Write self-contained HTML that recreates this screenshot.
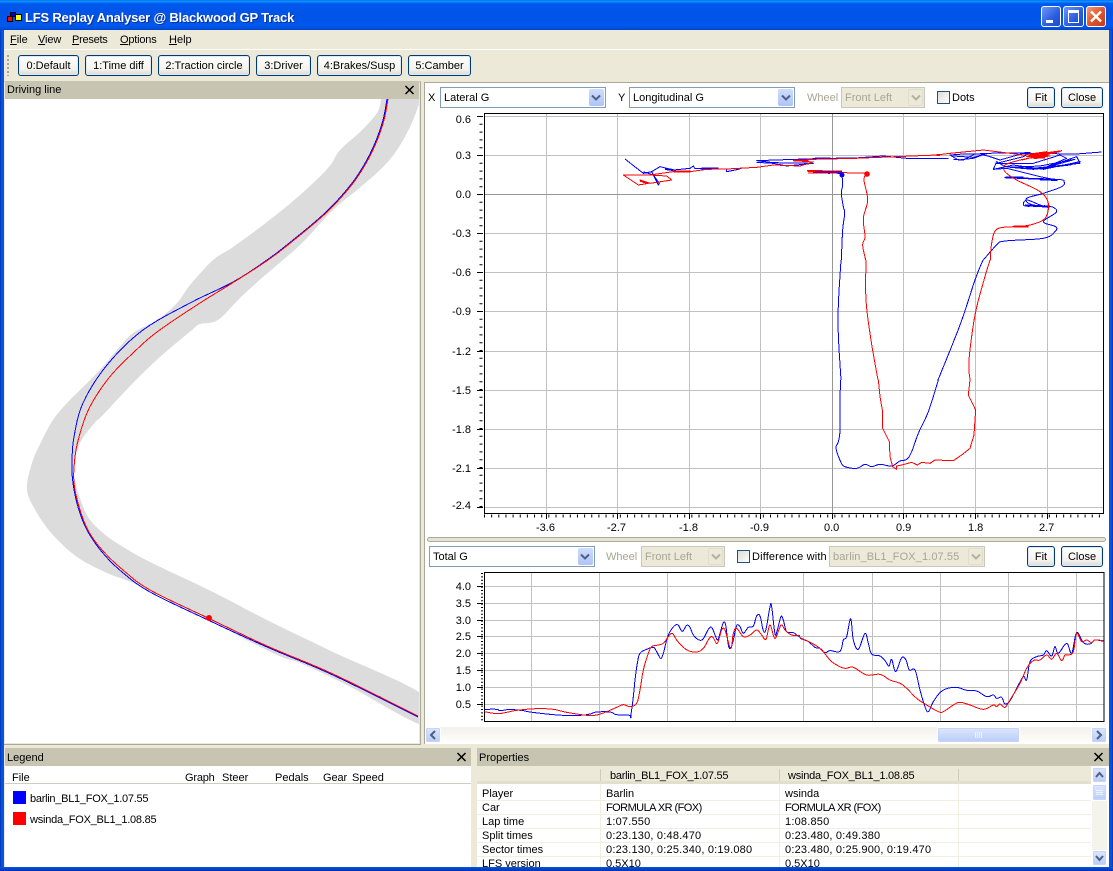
<!DOCTYPE html>
<html><head><meta charset="utf-8"><title>LFS Replay Analyser</title>
<style>
html,body{margin:0;padding:0;width:1113px;height:871px;overflow:hidden;background:#ECE9D8}
body{position:relative;font:11px/13px "Liberation Sans",sans-serif;color:#000}
div,span{position:absolute;box-sizing:border-box}
.t{white-space:nowrap;margin-top:1px}
.g{color:#a8a594}
.btn{border:1px solid #003c74;border-radius:3px;background:linear-gradient(#fff,#f4f3ee 70%,#dcd8ce);text-align:center;line-height:21px;box-shadow:inset 0 0 0 1px #dfe8f5;white-space:nowrap}
.hdr{background:#C7C5B2;height:18px}
.w{background:#fff}
.combo{border:1px solid #7F9DB9;background:#fff;height:21px;line-height:21px;padding-left:3px;white-space:nowrap}
.combo.d{border-color:#c9c7ba;background:#ECE9D8;color:#a8a594}
.ar{border-radius:2px;background:linear-gradient(#cfdcfc,#aec4f8);top:1px;bottom:1px;width:15px;right:1px}
.combo.d .ar{background:#ECE9D8;border:1px solid #e0ddcc}
.ck{width:13px;height:13px;border:1px solid #1c5180;background:linear-gradient(135deg,#dcdcd7,#fff)}
.sb{background:linear-gradient(#dde6fd,#b9ccf8);border:1px solid #fff;border-radius:2px;box-shadow:0 0 0 1px #c6d5f8 inset}
svg{position:absolute;left:0;top:0}
.l{fill:none;stroke-width:1;shape-rendering:crispEdges;vector-effect:non-scaling-stroke;stroke-linejoin:round}
.th{stroke-width:2}
.b{stroke:#00f}.r{stroke:#f00}
</style></head><body>

<!-- window frame -->
<div style="left:0;top:0;width:1113px;height:30px;background:linear-gradient(180deg,#0a6af0 0,#0997ff 5%,#0058ee 12%,#0053e6 50%,#0058ee 85%,#0050dc 95%,#0040c8 100%)"></div>
<div style="left:0;top:30px;width:4px;height:841px;background:linear-gradient(90deg,#0030b8,#0855dd 40%,#0855dd)"></div>
<div style="right:0;top:30px;width:4px;height:841px;background:linear-gradient(270deg,#0030b8,#0855dd 40%,#0855dd)"></div>
<div style="left:0;top:867px;width:1113px;height:4px;background:linear-gradient(#0855dd,#0030b8)"></div>

<!-- app icon -->
<div style="left:7px;top:16px;width:6px;height:6px;background:#f00;border:1px solid #000"></div>
<div style="left:10px;top:12px;width:6px;height:5px;background:#00c;border:1px solid #000"></div>
<div style="left:15px;top:14px;width:7px;height:7px;background:#ff0;border:1px solid #000"></div>

<span class="t" style="left:25px;top:9px;font-size:13px;line-height:15px;font-weight:bold;color:#fff;letter-spacing:-.2px;text-shadow:1px 1px 0 #0a2fa0">LFS Replay Analyser @ Blackwood GP Track</span>

<!-- window buttons -->
<div style="left:1041px;top:6px;width:20px;height:21px;border:1px solid #fff;border-radius:3px;background:linear-gradient(135deg,#6f96f5,#2a5ce0 60%,#2048c8)"><div style="left:4px;top:13px;width:7px;height:3px;background:#fff"></div></div>
<div style="left:1063px;top:6px;width:21px;height:21px;border:1px solid #fff;border-radius:3px;background:linear-gradient(135deg,#6f96f5,#2a5ce0 60%,#2048c8)"><div style="left:4px;top:3px;width:11px;height:13px;border:1px solid #fff;border-top-width:3px"></div></div>
<div style="left:1086px;top:6px;width:20px;height:21px;border:1px solid #fff;border-radius:3px;background:linear-gradient(135deg,#f09a7c,#e0562e 50%,#c23a14)">
<svg width="18" height="19"><path d="M4 4.500L14 14.500M14 4.500L4 14.500" stroke="#fff" stroke-width="2.400" fill="none"/></svg></div>

<!-- menu -->
<span class="t" style="left:10px;top:33px"><u>F</u>ile</span>
<span class="t" style="left:38px;top:33px;letter-spacing:-.1px"><u>V</u>iew</span>
<span class="t" style="left:72px;top:33px;letter-spacing:-.25px"><u>P</u>resets</span>
<span class="t" style="left:120px;top:33px;letter-spacing:-.2px"><u>O</u>ptions</span>
<span class="t" style="left:169px;top:33px"><u>H</u>elp</span>
<div style="left:4px;top:49px;width:1105px;height:1px;background:#fff"></div>

<!-- toolbar -->
<div style="left:7px;top:55px;width:2px;height:21px;background:repeating-linear-gradient(#a8a594 0 2px,#ECE9D8 2px 4px)"></div>
<div class="btn" style="left:18px;top:55px;width:61px;height:21px">0:Default</div>
<div class="btn" style="left:85px;top:55px;width:67px;height:21px">1:Time diff</div>
<div class="btn" style="left:158px;top:55px;width:92px;height:21px">2:Traction circle</div>
<div class="btn" style="left:256px;top:55px;width:55px;height:21px">3:Driver</div>
<div class="btn" style="left:317px;top:55px;width:85px;height:21px">4:Brakes/Susp</div>
<div class="btn" style="left:408px;top:55px;width:63px;height:21px">5:Camber</div>

<!-- panels -->
<div style="left:4px;top:81px;width:417px;height:664px;border:1px solid #ACA899;border-left:0;border-top-color:#d0cdbc"></div>
<div class="hdr" style="left:5px;top:81px;width:414px"></div>
<span class="t" style="left:7px;top:83px">Driving line</span>
<div class="w" style="left:5px;top:99px;width:414px;height:644px"></div>

<div class="w" style="left:424px;top:82px;width:685px;height:662px;border:1px solid #ACA899;border-right:0;border-bottom:0"></div>
<div style="left:427px;top:537px;width:679px;height:5px;border-radius:3px;background:#e6e3d4;border:1px solid #aca899"></div>

<!-- scrollbar below -->
<div style="left:425px;top:727px;width:682px;height:16px;background:linear-gradient(#f3f1ec,#fefefb)"></div>

<div class="hdr" style="left:5px;top:748px;width:466px"></div>
<span class="t" style="left:7px;top:751px">Legend</span>
<div class="w" style="left:5px;top:766px;width:466px;height:101px"></div>
<div style="left:5px;top:783px;width:466px;height:1px;background:#d0cec2"></div>

<div class="hdr" style="left:477px;top:748px;width:632px"></div>
<span class="t" style="left:479px;top:751px">Properties</span>
<div class="w" style="left:477px;top:766px;width:632px;height:101px"></div>
<div style="left:477px;top:766px;width:614px;height:18px;background:#ECE9D8;border-bottom:3px solid #e2dfcd"></div>

<svg width="1113" height="871">
 <defs><clipPath id="dl"><rect x="5" y="99" width="414" height="644"/></clipPath></defs>
 <!-- panel close icons -->
 <path d="M405.500 86L413.500 94M413.500 86L405.500 94" stroke="#000" stroke-width="1.500" fill="none"/>
 <path d="M457.500 753L465.500 761M465.500 753L457.500 761" stroke="#000" stroke-width="1.500" fill="none"/>
 <path d="M1094.500 753L1102.500 761M1102.500 753L1094.500 761" stroke="#000" stroke-width="1.500" fill="none"/>

 <!-- track -->
 <g clip-path="url(#dl)">
 <polygon class="s" fill="#DCDCDC" points="382,95 381,100 377,113 360,132 340,150 328,168 300,195 267,222 233,247 213,260 190,285 177,303 157,320 133,333 117,350 97,373 67,403 53,420 42,440 32,463 27,490 37,513 53,535 77,557 107,573 133,583 173,603 213,623 277,655 300,663 347,685 425,726 425,696 333,652 267,620 213,592 150,562 120,545 103,533 88,517 78,492 74,470 80,443 97,420 100,418 133,383 160,357 192,330 200,324 218,320 240,298 263,277 300,245 333,210 363,185 383,167 397,150 410,127 418,107 421,95"/>
 <polyline class="l b s" points="387,99 383,120 375,143 364,165 349,187 325,213 293,240 267,260 233,282 190,303 143,330 107,365 83,403 74,437 72,463 73,483 78,507 87,530 102,552 122,572 150,592 208,620 267,647 333,675 418,717"/>
 <polyline class="l r s" points="388,99 384,120 376,143 365,165 350,187 326,213 294,240 268,260 234,282 200,303 157,332 133,353 113,373 98,393 87,413 79,437 75,457 74,483 80,510 89,532 103,551 123,570 150,590 208,618 267,646 333,674 418,716"/>
 </g>
 <circle cx="209" cy="618" r="3" fill="#f00"/>

 <!-- top plot grid -->
 <g stroke="#c0c0c0" shape-rendering="crispEdges">
  <path d="M484 116.500H1103M484 155.500H1103M484 233.500H1103M484 272.500H1103M484 311.500H1103M484 351.500H1103M484 390.500H1103M484 429.500H1103M484 468.500H1103M484 507.500H1103"/>
  <path d="M546.500 113V513M617.500 113V513M689.500 113V513M760.500 113V513M903.500 113V513M975.500 113V513M1047.500 113V513"/>
 </g>
 <g stroke="#969696" shape-rendering="crispEdges"><path d="M484 194.500H1103M832.500 113V513"/></g>
 <rect x="484.500" y="113.500" width="619" height="400" fill="none" stroke="#000" shape-rendering="crispEdges"/>
 <line x1="484" x2="1103" y1="516" y2="516" stroke="#000" stroke-width="3" stroke-dasharray="1 6.150"/>
 <path d="M546.500 514V519M617.500 514V519M689.500 514V519M760.500 514V519M832.500 514V519M903.500 514V519M975.500 514V519M1047.500 514V519" stroke="#000" shape-rendering="crispEdges"/>
 <line x1="481" x2="481" y1="116" y2="513" stroke="#000" stroke-width="3" stroke-dasharray="1 6.800"/>
 <path d="M477 116.500H483M477 155.500H483M477 194.500H483M477 233.500H483M477 272.500H483M477 311.500H483M477 351.500H483M477 390.500H483M477 429.500H483M477 468.500H483M477 507.500H483" stroke="#000" shape-rendering="crispEdges"/>

 <!-- top plot data -->
 <g transform="translate(600 130) scale(.33333)">
  <polyline class="l b s" points="726,135 728,165 724,190 730,230 734,250 728,300 724,390"/>
  <polyline class="l b s" points="1150,390 1190,345 1215,333 1330,325 1365,305 1367,290 1330,275 1370,245 1345,228 1275,228 1280,210 1320,225 1345,232 1290,222 1280,205 1330,190 1385,170 1392,155 1370,148 1215,143 1370,150"/>
  <polyline class="l b" points="1370,150 1320,140 1220,115 1180,118 1190,95 1215,110 1300,115 1440,100 1430,80 1330,115 1400,85 1380,75 1300,100 1190,100 1270,80 1290,68 1160,70 1120,85 1075,90 1050,75 1090,72 1140,72 1170,80 1200,90 1270,70 1430,72 1505,66"/>
  <polyline class="l b" points="1180,118 1240,105 1330,118 1440,95 1410,105 1300,118 1230,112 1320,108 1425,88 1340,112"/>
  <polyline class="l b" points="1060,88 1090,90 1125,72 1165,70 1120,82 1060,78"/>
  <polyline class="l b th" points="1216,143 1270,143"/>
  <polyline class="l b th" points="1320,148 1372,150"/>
  <polyline class="l b th" points="1275,226 1350,230"/>
  <polyline class="l b" points="726,132 690,126 640,128 690,130"/>
  <polyline class="l b th" points="640,128 695,128"/>
  <polyline class="l b" points="1045,85 920,85 850,78 765,84 690,85 645,86 470,92 520,98 640,100 560,108 520,100 470,97"/>
  <polyline class="l b th" points="645,85 692,85"/>
  <polyline class="l b" points="75,87 130,130 155,125 180,110 220,120 270,115 280,108 285,116 380,117 380,125 415,118 430,113"/>
  <polyline class="l b th" points="195,117 220,120"/>
  <polyline class="l b th" points="305,116 355,116"/>
  <polyline class="l b" points="155,125 175,165 178,160 160,135 130,125"/>
  <polyline class="l r s" points="800,131 792,150 803,210 790,265 795,320 788,345 797,390"/>
  <polyline class="l r" points="800,129 720,128 670,125 622,122 670,126"/>
  <polyline class="l r th" points="622,123 668,123"/>
  <polyline class="l r s" points="1171,390 1175,340 1190,298 1240,290 1290,285 1335,265 1345,220 1320,185 1250,150 1215,125 1215,105 1260,90"/>
  <polyline class="l r" points="1260,90 1380,65 1280,80 1340,65 1270,75 1150,60 1050,70 1010,75 765,85 640,88 580,92 640,96 600,108 520,105 470,112 380,117 320,118 270,125 220,125 150,135 70,135 115,165 145,160 120,150 150,160 215,150 200,138 150,135"/>
  <polyline class="l r" points="1265,90 1385,62 1290,75 1350,78 1280,85"/>
  <polyline class="l r th" points="1285,78 1345,76"/>
  <polyline class="l r th" points="1300,84 1335,82"/>
  <polyline class="l r th" points="1240,290 1285,290"/>
  <polyline class="l r th" points="580,92 625,92"/>
  <polyline class="l r th" points="220,124 272,125"/>
  <polyline class="l r th" points="120,152 145,160"/>
  <polyline class="l r th" points="1010,75 1020,75"/>
 </g>
 <g>
  <polyline class="l b s" points="841,260 838,320 841,380"/>
  <polyline class="l r s" points="866,260 866,300 871,340 878,380"/>
  <polyline class="l r s" points="990,260 984,280 975,315 969,360 970,380"/>
  <polyline class="l b s" points="938,380 960,325 975,280 983,260"/>
 </g>
 <g transform="translate(800 380) scale(.33333)">
  <polyline class="l b s" points="122,0 120,60 120,150 115,185 108,205 122,245 135,260 170,265 195,253 215,260 240,253 275,258 300,243 320,238 335,215 355,160 385,95 415,0"/>
  <polyline class="l r" points="235,0 240,50 247,90 248,145 268,185 270,230 278,260 290,268 290,258 305,255 335,247 352,255 365,247 390,250 405,240 460,242 485,225 510,205 522,165 527,90 505,45 510,0"/>
 </g>
 <circle cx="842" cy="175" r="2.500" fill="#00f"/>
 <circle cx="867" cy="174" r="2.800" fill="#f00"/>
 <path d="M808 171H842M808 173H836" stroke="#f00" shape-rendering="crispEdges"/>
 <path d="M815 172H842" stroke="#00f" shape-rendering="crispEdges"/>

 <!-- bottom plot grid -->
 <g stroke="#c0c0c0" shape-rendering="crispEdges">
  <path d="M484 586.500H1104M484 603.500H1104M484 620.500H1104M484 636.500H1104M484 653.500H1104M484 670.500H1104M484 687.500H1104M484 704.500H1104"/>
  <path d="M531.500 573V721M599.500 573V721M667.500 573V721M735.500 573V721M803.500 573V721M872.500 573V721M940.500 573V721M1008.500 573V721M1076.500 573V721"/>
 </g>
 <rect x="484.500" y="572.500" width="619.500" height="149" fill="none" stroke="#000" shape-rendering="crispEdges"/>
 <line x1="482" x2="482" y1="573" y2="721" stroke="#000" stroke-width="2" stroke-dasharray="1 2.400"/>
 <path d="M477 586.500H483M477 603.500H483M477 620.500H483M477 636.500H483M477 653.500H483M477 670.500H483M477 687.500H483M477 704.500H483" stroke="#000" shape-rendering="crispEdges"/>
 <g transform="translate(480 590) scale(.33333)">
  <polyline class="l b s" points="13,358 50,358 60,362 90,358 110,360 130,362 150,366 200,372 250,376 300,376 330,372 350,366 390,366 410,374 450,376 452,380 460,320 465,270 472,220 480,190 500,178 520,172 530,185 542,205 550,190 560,150 570,125 585,106 595,106 607,124 620,106 630,112 640,135 657,150 670,146 685,118 695,112 705,135 713,150 720,130 730,98 737,105 745,165 752,175 760,150 770,107 780,110 790,130 805,112 820,108 830,78 840,78 850,122 858,118 870,50 875,50 885,132 892,120 903,80 910,90 920,125 940,128 950,135 960,142"/>
  <polyline class="l r s" points="13,365 50,371 80,367 110,361 170,356 220,358 260,367 320,376 350,375 380,365 410,352 430,344 450,350 470,340 480,300 490,240 505,190 515,170 530,166 550,160 565,140 577,130 590,150 605,167 625,182 650,186 670,175 690,142 700,144 712,160 725,120 735,120 752,176 760,130 770,115 790,140 810,135 830,120 845,135 858,148 870,105 885,145 903,105 915,120 935,135 960,136"/>
 </g>
 <g transform="translate(800 590) scale(.33333)">
  <polyline class="l b s" points="0,145 25,155 45,172 60,175 75,188 90,182 120,184 130,150 140,140 152,86 160,150 175,178 195,130 205,160 215,192 240,198 255,212 267,228 275,208 287,245 305,203 318,210 328,240 345,240 360,300 375,350 385,365 400,335 420,308 440,296 470,292 500,301 530,303 560,320 580,315 590,325 605,322 615,342 630,332 650,295 670,260 680,270 690,215 710,200 730,195 740,182 755,198 765,170 775,190 800,160 815,190 830,128 850,158 870,162 885,150 910,154"/>
  <polyline class="l r s" points="0,143 40,162 65,180 90,210 110,225 135,235 160,232 200,255 240,253 270,270 300,280 320,295 350,325 380,345 415,365 430,365 460,345 480,337 510,345 550,358 580,345 590,350 600,342 615,352 630,330 660,280 680,235 700,212 720,210 740,195 755,208 770,190 785,212 795,195 805,195 820,185 830,130 845,155 860,150 875,158 885,150 910,152"/>
 </g>

 <!-- properties table lines -->
 <g stroke="#F1EFE2" shape-rendering="crispEdges">
  <path d="M477 800.500H1091M477 814.500H1091M477 828.500H1091M477 842.500H1091M477 856.500H1091M600.500 784V867M779.500 784V867M958.500 784V867"/>
 </g>
 <path d="M600.500 769V781M779.500 769V781M958.500 769V781" stroke="#cfccb9" shape-rendering="crispEdges"/>
</svg>

<!-- top controls -->
<span class="t" style="left:428px;top:91px">X</span>
<div class="combo" style="left:440px;top:87px;width:166px">Lateral G<span class="ar"></span></div>
<span class="t" style="left:618px;top:91px">Y</span>
<div class="combo" style="left:629px;top:87px;width:166px">Longitudinal G<span class="ar"></span></div>
<span class="t g" style="left:807px;top:91px">Wheel</span>
<div class="combo d" style="left:841px;top:87px;width:84px">Front Left<span class="ar"></span></div>
<div class="ck" style="left:937px;top:91px"></div>
<span class="t" style="left:952px;top:91px">Dots</span>
<div class="btn" style="left:1027px;top:87px;width:28px;height:21px">Fit</div>
<div class="btn" style="left:1061px;top:87px;width:42px;height:21px">Close</div>

<!-- y labels -->
<span class="t" style="right:642px;top:113px">0.6</span>
<span class="t" style="right:642px;top:149px">0.3</span>
<span class="t" style="right:642px;top:188px">0.0</span>
<span class="t" style="right:642px;top:227px">-0.3</span>
<span class="t" style="right:642px;top:266px">-0.6</span>
<span class="t" style="right:642px;top:305px">-0.9</span>
<span class="t" style="right:642px;top:345px">-1.2</span>
<span class="t" style="right:642px;top:384px">-1.5</span>
<span class="t" style="right:642px;top:423px">-1.8</span>
<span class="t" style="right:642px;top:462px">-2.1</span>
<span class="t" style="right:642px;top:499px">-2.4</span>

<!-- x labels -->
<span class="t" style="left:536px;top:521px">-3.6</span>
<span class="t" style="left:607px;top:521px">-2.7</span>
<span class="t" style="left:679px;top:521px">-1.8</span>
<span class="t" style="left:750px;top:521px">-0.9</span>
<span class="t" style="left:824px;top:521px">0.0</span>
<span class="t" style="left:896px;top:521px">0.9</span>
<span class="t" style="left:968px;top:521px">1.8</span>
<span class="t" style="left:1039px;top:521px">2.7</span>

<!-- second controls -->
<div class="combo" style="left:429px;top:546px;width:166px">Total G<span class="ar"></span></div>
<span class="t g" style="left:606px;top:550px">Wheel</span>
<div class="combo d" style="left:641px;top:546px;width:84px">Front Left<span class="ar"></span></div>
<div class="ck" style="left:737px;top:550px"></div>
<span class="t" style="left:752px;top:550px;letter-spacing:.15px">Difference with</span>
<div class="combo d" style="left:829px;top:546px;width:156px;letter-spacing:.1px">barlin_BL1_FOX_1.07.55<span class="ar"></span></div>
<div class="btn" style="left:1027px;top:546px;width:28px;height:21px">Fit</div>
<div class="btn" style="left:1061px;top:546px;width:42px;height:21px">Close</div>

<span class="t" style="right:642px;top:580px">4.0</span>
<span class="t" style="right:642px;top:597px">3.5</span>
<span class="t" style="right:642px;top:614px">3.0</span>
<span class="t" style="right:642px;top:630px">2.5</span>
<span class="t" style="right:642px;top:647px">2.0</span>
<span class="t" style="right:642px;top:664px">1.5</span>
<span class="t" style="right:642px;top:681px">1.0</span>
<span class="t" style="right:642px;top:698px">0.5</span>

<!-- chevrons & scrollbars -->
<div class="sb" style="left:425px;top:727px;width:16px;height:16px"></div>
<div class="sb" style="left:937px;top:727px;width:83px;height:16px"></div>
<div class="sb" style="left:1091px;top:727px;width:16px;height:16px"></div>
<div class="sb" style="left:1092px;top:767px;width:15px;height:16px"></div>
<div class="sb" style="left:1092px;top:784px;width:15px;height:17px"></div>
<div class="sb" style="left:1092px;top:850px;width:15px;height:16px"></div>
<div style="left:1092px;top:801px;width:15px;height:49px;background:#f4f3ec"></div>
<svg width="1113" height="871" style="pointer-events:none">
 <g fill="none" stroke-width="2">
  <path d="M592 95.500L596 99.500 600 95.500" stroke="#4d6185"/>
  <path d="M782 95.500L786 99.500 790 95.500" stroke="#4d6185"/>
  <path d="M912 95.500L916 99.500 920 95.500" stroke="#b5b2a3"/>
  <path d="M581 554.500L585 558.500 589 554.500" stroke="#4d6185"/>
  <path d="M712 554.500L716 558.500 720 554.500" stroke="#b5b2a3"/>
  <path d="M972 554.500L976 558.500 980 554.500" stroke="#b5b2a3"/>
  <path d="M435 731L431 735 435 739" stroke="#4d6185"/>
  <path d="M1097 731L1101 735 1097 739" stroke="#4d6185"/>
  <path d="M1096 777L1099.500 773 1103 777" stroke="#4d6185"/>
  <path d="M1096 856L1099.500 860 1103 856" stroke="#4d6185"/>
 </g>
 <path d="M975.500 732V738M977.500 732V738M979.500 732V738M981.500 732V738" stroke="#eef3ff" shape-rendering="crispEdges"/>
 <path d="M1096 790.500H1103M1096 792.500H1103M1096 794.500H1103" stroke="#eef3ff" shape-rendering="crispEdges"/>
</svg>

<!-- legend -->
<span class="t" style="left:12px;top:771px">File</span>
<span class="t" style="left:185px;top:771px;letter-spacing:-.2px">Graph</span>
<span class="t" style="left:222px;top:771px">Steer</span>
<span class="t" style="left:275px;top:771px">Pedals</span>
<span class="t" style="left:323px;top:771px;letter-spacing:-.1px">Gear</span>
<span class="t" style="left:352px;top:771px">Speed</span>
<div style="left:13px;top:791px;width:13px;height:13px;background:#00f"></div>
<span class="t" style="left:30px;top:792px;letter-spacing:-.27px">barlin_BL1_FOX_1.07.55</span>
<div style="left:13px;top:812px;width:13px;height:13px;background:#f00"></div>
<span class="t" style="left:30px;top:813px;letter-spacing:-.23px">wsinda_FOX_BL1_1.08.85</span>

<!-- properties -->
<span class="t" style="left:610px;top:769px;letter-spacing:-.27px">barlin_BL1_FOX_1.07.55</span>
<span class="t" style="left:788px;top:769px;letter-spacing:-.23px">wsinda_FOX_BL1_1.08.85</span>
<div style="left:477px;top:784px;width:614px;height:83px;overflow:hidden">
<span class="t" style="left:5px;top:3px">Player</span><span class="t" style="left:129px;top:3px">Barlin</span><span class="t" style="left:308px;top:3px">wsinda</span>
<span class="t" style="left:5px;top:17px">Car</span><span class="t" style="left:129px;top:17px;letter-spacing:-.55px">FORMULA XR (FOX)</span><span class="t" style="left:308px;top:17px;letter-spacing:-.55px">FORMULA XR (FOX)</span>
<span class="t" style="left:5px;top:31px">Lap time</span><span class="t" style="left:129px;top:31px;letter-spacing:.2px">1:07.550</span><span class="t" style="left:308px;top:31px;letter-spacing:.2px">1:08.850</span>
<span class="t" style="left:5px;top:45px">Split times</span><span class="t" style="left:129px;top:45px;letter-spacing:.2px">0:23.130, 0:48.470</span><span class="t" style="left:308px;top:45px;letter-spacing:.2px">0:23.480, 0:49.380</span>
<span class="t" style="left:5px;top:59px">Sector times</span><span class="t" style="left:129px;top:59px;letter-spacing:.2px">0:23.130, 0:25.340, 0:19.080</span><span class="t" style="left:308px;top:59px;letter-spacing:.2px">0:23.480, 0:25.900, 0:19.470</span>
<span class="t" style="left:5px;top:73px">LFS version</span><span class="t" style="left:129px;top:73px">0.5X10</span><span class="t" style="left:308px;top:73px">0.5X10</span>
</div>
<script>
document.querySelectorAll('.s').forEach(function(e){
 var n=e.getAttribute('points').trim().split(/\s+/).map(function(p){return p.split(',').map(Number)}),o=[],L=n.length;
 for(var i=0;i<L-1;i++){
  var a=n[Math.max(i-1,0)],b=n[i],c=n[i+1],d=n[Math.min(i+2,L-1)];
  for(var k=0;k<6;k++){
   var t=k/6,t2=t*t,t3=t2*t,p=[];
   for(var j=0;j<2;j++)p[j]=(.5*(2*b[j]+(c[j]-a[j])*t+(2*a[j]-5*b[j]+4*c[j]-d[j])*t2+(3*b[j]-a[j]-3*c[j]+d[j])*t3)).toFixed(2);
   o.push(p.join(','));
  }
 }
 o.push(n[L-1].join(','));
 e.setAttribute('points',o.join(' '));
});
</script>
</body></html>
